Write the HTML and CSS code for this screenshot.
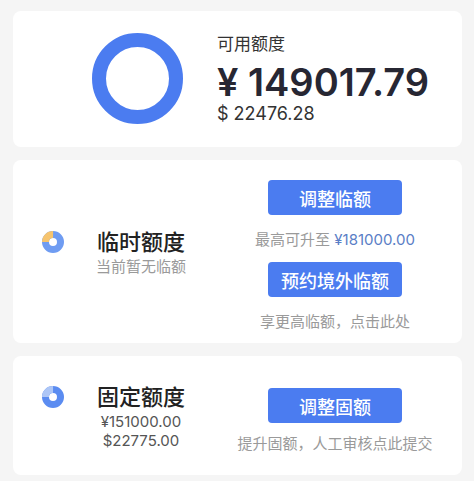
FILE: index.html
```html
<!DOCTYPE html>
<html>
    <head>
        <title>额度</title>
        <link rel="stylesheet" href="styles.css">
    </head>
    <body>
        <div class="card card-total">
            <div class="ring"></div>
            <div class="total">
                <div class="total-label">可用额度</div>
                <div class="total-cny">¥ 149017.79</div>
                <div class="total-usd">$ 22476.28</div>
            </div>
        </div>

        <div class="card card-temp">
            <div class="quota">
                <svg class="pie" width="22" height="22" viewBox="0 0 22 22">
                    <circle cx="11" cy="11" r="7.5" fill="none" stroke="#6f9cf2" stroke-width="7"/>
                    <circle cx="11" cy="11" r="7.5" fill="none" stroke="#f6c46e" stroke-width="7"
                        stroke-dasharray="11.78 47.12" transform="rotate(180 11 11)"/>
                </svg>
                <div class="quota-text">
                    <div class="quota-title">临时额度</div>
                    <div class="quota-sub">当前暂无临额</div>
                </div>
            </div>
            <div class="side side-temp">
                <button class="btn">调整临额</button>
                <div class="note">最高可升至 <span class="hl">¥181000.00</span></div>
                <button class="btn btn-next">预约境外临额</button>
                <div class="note">享更高临额，点击此处</div>
            </div>
        </div>

        <div class="card card-fixed">
            <div class="quota">
                <svg class="pie" width="22" height="22" viewBox="0 0 22 22">
                    <circle cx="11" cy="11" r="7.5" fill="none" stroke="#5b8cf1" stroke-width="7"/>
                    <circle cx="11" cy="11" r="7.5" fill="none" stroke="#adc6f6" stroke-width="7"
                        stroke-dasharray="11.78 47.12" transform="rotate(180 11 11)"/>
                </svg>
                <div class="quota-text">
                    <div class="quota-title">固定额度</div>
                    <div class="quota-num">¥151000.00</div>
                    <div class="quota-num">$22775.00</div>
                </div>
            </div>
            <div class="side side-fixed">
                <button class="btn">调整固额</button>
                <div class="note">提升固额，人工审核点此提交</div>
            </div>
        </div>
    </body>
</html>
```

FILE: styles.css
```css
* {
    box-sizing: border-box;
}

body {
    margin: 0;
    padding: 11px 12px 0 13px;
    background-color: #f5f5f5;
    font-family: Inter, "Noto Sans CJK SC", sans-serif;
    color: #2a2a35;
}

.card {
    background-color: #fff;
    border-radius: 8px;
    margin-bottom: 13px;
    display: flex;
    align-items: center;
}

/* top card */
.card-total {
    padding: 22px 0 23px 79px;
}

.ring {
    width: 91px;
    height: 91px;
    border-radius: 50%;
    border: 14px solid #4b7cf0;
    flex-shrink: 0;
}

.total {
    margin-left: 34px;
}

.total-label {
    font-size: 17px;
    line-height: 23px;
    color: #333;
}

.total-cny {
    font-size: 38px;
    line-height: 44px;
    font-weight: 600;
    margin-top: 4px;
    color: #272733;
}

.total-usd {
    font-size: 18px;
    line-height: 20px;
    color: #333;
}

/* quota cards */
.card-temp, .card-fixed {
    padding: 0 27px 0 29px;
}

.quota {
    display: flex;
    align-items: flex-start;
}

.pie {
    margin-top: 4px;
    flex-shrink: 0;
}

.quota-text {
    width: 100px;
    margin-left: 27px;
    text-align: center;
}

.quota-title {
    font-size: 22px;
    line-height: 30px;
    font-weight: 500;
    color: #222;
}

.quota-sub {
    font-size: 15px;
    line-height: 20px;
    color: #9a9a9a;
}

.quota-num {
    font-size: 15px;
    line-height: 19px;
    color: #555;
}

.side {
    width: 200px;
    margin-left: auto;
    display: flex;
    flex-direction: column;
    align-items: center;
}

.side-temp {
    padding: 20px 0 10px;
}

.side-fixed {
    padding: 32px 0 20px;
}

.btn {
    width: 134px;
    height: 35px;
    border: none;
    border-radius: 4px;
    background-color: #4b7cf0;
    color: #fff;
    font-family: inherit;
    font-size: 18px;
    font-weight: 500;
    padding: 0;
    cursor: pointer;
}

.btn-next {
    margin-top: 11px;
}

.note {
    font-size: 15px;
    line-height: 22px;
    margin-top: 14px;
    color: #9a9a9a;
    white-space: nowrap;
}

.side-fixed .note {
    margin-top: 10px;
}

.hl {
    color: #5a7ec6;
}
```
